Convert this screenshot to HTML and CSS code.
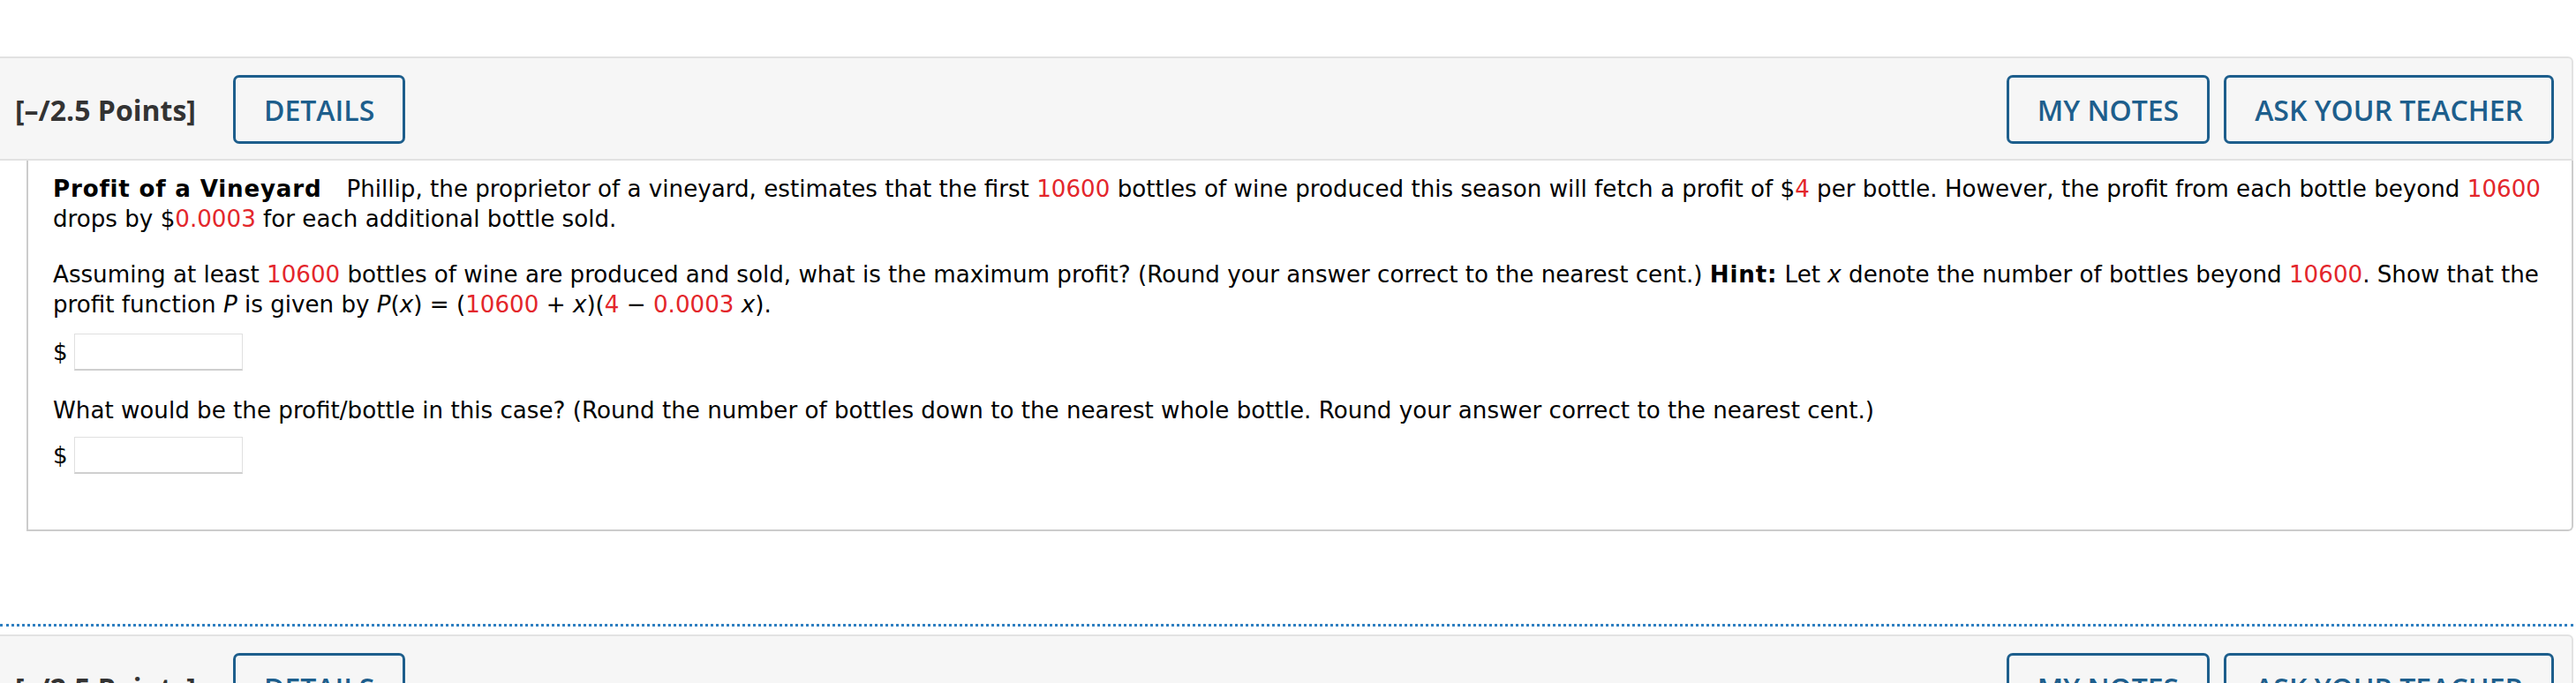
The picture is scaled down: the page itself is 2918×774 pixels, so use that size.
FILE: index.html
```html
<!DOCTYPE html>
<html lang="en">
<head>
<meta charset="utf-8">
<title>Profit of a Vineyard</title>
<link rel="stylesheet" href="styles.css">
</head>
<body>
<div class="page">
  <section class="question">
    <header class="q-header">
      <span class="points">[–/2.5 Points]</span>
      <button class="btn btn-details" type="button">DETAILS</button>
      <div class="spacer"></div>
      <div class="btn-group">
        <button class="btn" type="button">MY NOTES</button>
        <button class="btn" type="button">ASK YOUR TEACHER</button>
      </div>
    </header>
    <div class="q-body">
      <p class="para"><b class="title">Profit of a Vineyard</b>Phillip, the proprietor of a vineyard, estimates that the first <span class="red">10600</span> bottles of wine produced this season will fetch a profit of $<span class="red">4</span> per bottle. However, the profit from each bottle beyond <span class="red">10600</span><br>drops by $<span class="red">0.0003</span> for each additional bottle sold.</p>
      <p class="para para-gap">Assuming at least <span class="red">10600</span> bottles of wine are produced and sold, what is the maximum profit? (Round your answer correct to the nearest cent.) <b class="hint">Hint:</b> Let <i>x</i> denote the number of bottles beyond <span class="red">10600</span>. Show that the<br>profit function <i>P</i> is given by <i>P</i>(<i>x</i>) = (<span class="red">10600</span> + <i>x</i>)(<span class="red">4</span> − <span class="red">0.0003</span> <i>x</i>).</p>
      <div class="answer answer-first"><span class="dollar">$</span><input class="ans-input" type="text" aria-label="maximum profit"></div>
      <p class="para para-gap2">What would be the profit/bottle in this case? (Round the number of bottles down to the nearest whole bottle. Round your answer correct to the nearest cent.)</p>
      <div class="answer answer-second"><span class="dollar">$</span><input class="ans-input" type="text" aria-label="profit per bottle"></div>
    </div>
  </section>
  <div class="divider"></div>
  <section class="question question-next">
    <header class="q-header">
      <span class="points">[–/2.5 Points]</span>
      <button class="btn btn-details" type="button">DETAILS</button>
      <div class="spacer"></div>
      <div class="btn-group">
        <button class="btn" type="button">MY NOTES</button>
        <button class="btn" type="button">ASK YOUR TEACHER</button>
      </div>
    </header>
  </section>
</div>
</body>
</html>
```
FILE: styles.css
```css
html, body {
  margin: 0;
  padding: 0;
  background: #ffffff;
}

body {
  height: 774px;
  overflow: hidden;
}

.page {
  padding-top: 64px;
  padding-right: 3px;
}

.q-header {
  display: flex;
  align-items: center;
  background: #f6f6f6;
  border: 2px solid #e2e2e2;
  border-left: none;
  border-radius: 0 6px 0 0;
  padding: 19px 20px 17px 17px;
}

.points {
  font-family: "Open Sans", "Liberation Sans", sans-serif;
  font-weight: 700;
  font-size: 32px;
  color: #333333;
}

.btn {
  font-family: "Open Sans", "Liberation Sans", sans-serif;
  font-weight: 600;
  font-size: 32px;
  color: #1d5e8c;
  background: transparent;
  border: 3px solid #1d5e8c;
  border-radius: 7px;
  height: 78px;
  padding: 0 32px;
  display: inline-flex;
  align-items: center;
  justify-content: center;
  cursor: pointer;
}

.btn-details {
  margin-left: 42px;
}

.spacer {
  flex: 1;
}

.btn-group {
  display: flex;
  gap: 16px;
}

.q-body {
  margin-left: 30px;
  border: 2px solid #cccccc;
  border-top: none;
  border-radius: 0 0 6px 0;
  padding: 15px 12px 63px 28px;
  font-family: "DejaVu Sans", Verdana, sans-serif;
  font-size: 26.15px;
  line-height: 34px;
  color: #000000;
}

.para {
  margin: 0;
}

.para-gap {
  margin-top: 29px;
}

.para-gap2 {
  margin-top: 28px;
}

.title {
  margin-right: 28px;
  letter-spacing: 0.8px;
}

.hint {
  letter-spacing: 0.8px;
}

.red {
  color: #e3262b;
}

.answer {
  display: flex;
  align-items: center;
}

.answer-first {
  margin-top: 16px;
}

.answer-second {
  margin-top: 13px;
}

.dollar {
  width: 24px;
}

.ans-input {
  width: 191px;
  height: 42px;
  box-sizing: border-box;
  border: 1px solid #e0e0e0;
  border-bottom: 2px solid #cfcfcf;
  background: #ffffff;
  margin: 0;
  padding: 0 6px;
  font: inherit;
}

.divider {
  margin-top: 105px;
  border-top: 3px dotted #2f7fc1;
}

.question-next {
  margin-top: 9px;
}
```
